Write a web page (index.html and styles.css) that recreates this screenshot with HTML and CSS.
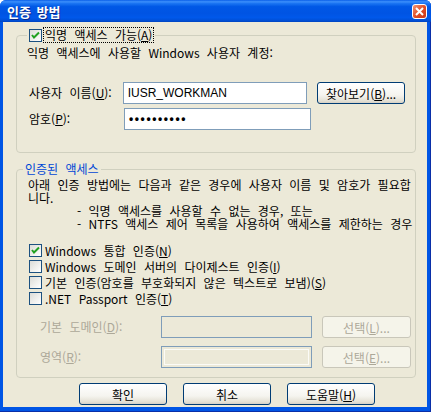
FILE: index.html
```html
<!DOCTYPE html>
<html lang="ko">
<head>
  <meta charset="UTF-8" />
  <title>인증 방법</title>
  <link rel="stylesheet" href="styles.css">
</head>
<body>

  <div class="window">
    <!-- TITLE BAR -->
    <div class="titlebar">
      <span class="title">인증 방법</span>
      <span class="close-btn">
        <svg width="9" height="9" viewBox="0 0 9 9">
          <path d="M1 1 L8 8 M8 1 L1 8" stroke="#fff" stroke-width="2" fill="none"/>
        </svg>
      </span>
    </div>

    <div class="dialog">
      <!-- ANONYMOUS ACCESS -->
      <fieldset class="group group-anon">
        <legend class="legend-check">
          <span class="checkbox checked">
            <svg width="11" height="11" viewBox="0 0 11 11">
              <path d="M2 5 L4 7.5 L9 2.5" stroke="#21a121" stroke-width="2" fill="none"/>
            </svg>
          </span>
          <span class="focus">익명 액세스 가능(<u>A</u>)</span>
        </legend>
        <p class="note">익명 액세스에 사용할 Windows 사용자 계정:</p>
        <div class="field-row first">
          <label class="field-label">사용자 이름(<u>U</u>):</label>
          <div class="textbox">IUSR_WORKMAN</div>
          <button class="btn">찾아보기(<u>B</u>)...</button>
        </div>
        <div class="field-row">
          <label class="field-label">암호(<u>P</u>):</label>
          <div class="textbox password">••••••••••</div>
        </div>
      </fieldset>

      <!-- AUTHENTICATED ACCESS -->
      <fieldset class="group group-auth">
        <legend class="legend-title">인증된 액세스</legend>
        <p class="info">
          아래 인증 방법에는 다음과 같은 경우에 사용자 이름 및 암호가 필요합<br>
          니다.<br>
          <span class="indent">- 익명 액세스를 사용할 수 없는 경우, 또는</span><br>
          <span class="indent">- NTFS 액세스 제어 목록을 사용하여 액세스를 제한하는 경우</span>
        </p>

        <div class="checks">
          <div class="check-row">
            <span class="checkbox checked">
              <svg width="11" height="11" viewBox="0 0 11 11">
                <path d="M2 5 L4 7.5 L9 2.5" stroke="#21a121" stroke-width="2" fill="none"/>
              </svg>
            </span>
            <span>Windows 통합 인증(<u>N</u>)</span>
          </div>
          <div class="check-row">
            <span class="checkbox"></span>
            <span>Windows 도메인 서버의 다이제스트 인증(<u>I</u>)</span>
          </div>
          <div class="check-row">
            <span class="checkbox"></span>
            <span>기본 인증(암호를 부호화되지 않은 텍스트로 보냄)(<u>S</u>)</span>
          </div>
          <div class="check-row">
            <span class="checkbox"></span>
            <span>.NET Passport 인증(<u>T</u>)</span>
          </div>
        </div>

        <div class="domain-row first">
          <label class="domain-label">기본 도메인(<u>D</u>):</label>
          <div class="textbox disabled"></div>
          <button class="btn" disabled>선택(<u>L</u>)...</button>
        </div>
        <div class="domain-row">
          <label class="domain-label">영역(<u>R</u>):</label>
          <div class="textbox disabled inset"></div>
          <button class="btn" disabled>선택(<u>E</u>)...</button>
        </div>
      </fieldset>

      <!-- DIALOG BUTTONS -->
      <div class="actions">
        <button class="btn">확인</button>
        <button class="btn">취소</button>
        <button class="btn">도움말(<u>H</u>)</button>
      </div>
    </div>
  </div>

</body>
</html>
```

FILE: styles.css
```css
* {
  box-sizing: border-box;
}

body {
  margin: 0;
  font-family: "Noto Sans CJK KR", "Liberation Sans", sans-serif;
  font-size: 12px;
  color: #000;
  word-spacing: 4px;
}

/* WINDOW FRAME */
.window {
  width: 431px;
  height: 412px;
  display: flex;
  flex-direction: column;
  background: #0055e5;
  box-shadow: inset -1px -1px 0 #0a2fa8;
  border-radius: 6px 6px 0 0;
  overflow: hidden;
}

.titlebar {
  height: 22px;
  flex: none;
  display: flex;
  align-items: center;
  justify-content: space-between;
  padding: 0 4px 0 7px;
  background: linear-gradient(#0a5fe8 0%, #3b8ffb 8%, #1a74f2 16%, #0058e6 30%, #0054e3 60%, #0058ea 80%, #0050d8 92%, #0044c0 100%);
}

.title {
  color: #fff;
  font-weight: bold;
  font-size: 13px;
  text-shadow: 1px 1px 0 #0c2a8a;
  word-spacing: 2px;
}

.close-btn {
  width: 15px;
  height: 15px;
  border: 1px solid #fff;
  border-radius: 3px;
  background: linear-gradient(135deg, #f29575, #e04b23 55%, #c8371a);
  display: flex;
  align-items: center;
  justify-content: center;
}

.dialog {
  flex: 1;
  margin: 0 4px 5px 3px;
  padding: 6px 11px 0 13px;
  background: #ece9d8;
  display: flex;
  flex-direction: column;
}

/* GROUP BOXES */
.group {
  margin: 0;
  min-width: 0;
  flex: none;
  border: 1px solid #d0d0bf;
  border-radius: 4px;
  padding: 0 10px 22px;
}

.group-auth {
  margin-top: 9px;
  padding: 0 4px 9px 10px;
}

.legend-check {
  padding: 0 2px;
  line-height: 13px;
  display: flex;
  align-items: center;
  gap: 2px;
}

.focus {
  outline: 1px dotted #000;
  padding: 0 1px;
  line-height: 14px;
}

.legend-title {
  margin-left: -4px;
  padding: 0 2px;
  line-height: 14px;
  color: #0046d5;
}

/* CHECKBOXES */
.checkbox {
  width: 13px;
  height: 13px;
  flex: none;
  border: 1px solid #1c5180;
  background: linear-gradient(135deg, #dcdcd7, #fff);
  display: inline-flex;
  align-items: center;
  justify-content: center;
}

.checks {
  margin-top: 12px;
}

.check-row {
  height: 16px;
  padding-left: 2px;
  display: flex;
  align-items: center;
  gap: 3px;
}

/* TEXT */
.note {
  margin: 4px 0 0;
  line-height: 14px;
}

.info {
  margin: 2px 0 0 1px;
  line-height: 13px;
  white-space: nowrap;
}

.indent {
  padding-left: 49px;
}

/* FIELDS */
.field-row {
  display: flex;
  align-items: flex-start;
  margin-top: 4px;
}

.field-row.first {
  margin-top: 22px;
}

.field-label {
  width: 97px;
  padding-left: 2px;
  line-height: 22px;
}

.textbox {
  width: 187px;
  height: 22px;
  border: 1px solid #7f9db9;
  background: #fff;
  padding: 0 4px;
  font-family: "Liberation Sans", sans-serif;
  font-size: 12px;
  line-height: 20px;
}

.textbox.password {
  font-weight: bold;
  letter-spacing: 1.6px;
}

.textbox.disabled {
  width: 151px;
  background: #ece9d8;
}

.textbox.inset {
  box-shadow: inset 0 0 0 2px #ece9d8, inset 0 0 0 3px #fbfbf7;
}

.domain-row {
  display: flex;
  align-items: flex-start;
  margin-top: 8px;
  padding-left: 13px;
}

.domain-row.first {
  margin-top: 10px;
}

.domain-label {
  width: 121px;
  line-height: 22px;
  color: #aca899;
}

/* BUTTONS */
.btn {
  width: 89px;
  height: 22px;
  margin-left: 10px;
  padding: 0;
  border: 1px solid #003c74;
  border-radius: 3px;
  background: linear-gradient(#ffffff, #f5f4ef 60%, #e3e0d4 90%, #d6d0c5);
  font-family: "Noto Sans CJK KR", "Liberation Sans", sans-serif;
  font-size: 12px;
  color: #000;
  word-spacing: 4px;
}

.btn:disabled {
  border-color: #c9c7ba;
  background: #f5f4ea;
  color: #aca899;
}

.actions {
  margin-top: 5px;
  padding-left: 63px;
  display: flex;
  gap: 16px;
}

.actions .btn {
  width: 88px;
  margin-left: 0;
}
```
